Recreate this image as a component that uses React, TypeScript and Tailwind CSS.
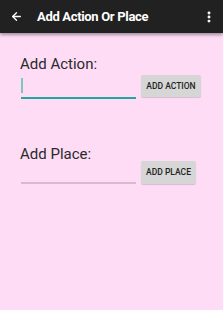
import { ArrowLeft, EllipsisVertical } from "lucide-react"

export default function App() {
    return (
        <div className="w-[223px] h-[310px] bg-[#fedcf5] font-['Roboto',sans-serif] overflow-hidden">
            {/* Toolbar */}
            <div className="h-[33px] bg-[#212121] flex items-center text-white shadow-[0_2px_3px_rgba(0,0,0,0.35)]">
                <ArrowLeft className="w-[13px] h-[13px] ml-[10px]" strokeWidth={2.5} />
                <span className="ml-[14px] text-[13px] font-bold tracking-tight">Add Action Or Place</span>
                <EllipsisVertical className="w-[14px] h-[14px] ml-auto mr-[7px]" strokeWidth={3} />
            </div>

            <div className="pt-[22px] pl-5">
                {/* Action */}
                <div className="text-[15px] leading-[18px] text-[#2a2a2a]">Add Action:</div>
                <div className="flex items-start pl-px mt-[2px]">
                    <div className="relative w-[115px] h-[24px] border-b-2 border-[#26a69a]">
                        <div className="absolute left-0 top-[3px] w-[2px] h-[15px] bg-[#7fc4bd]" />
                    </div>
                    <button className="ml-[5px] w-[60px] h-[22px] bg-[#d6d6d6] rounded-[2px] shadow-[0_1px_1px_rgba(0,0,0,0.15)] text-[8.5px] font-medium text-[#222]">
                        ADD ACTION
                    </button>
                </div>

                {/* Place */}
                <div className="mt-[46px] text-[15px] leading-[18px] text-[#2a2a2a]">Add Place:</div>
                <div className="flex items-start pl-px -mt-[2px]">
                    <div className="w-[115px] h-[23px] border-b-2 border-[#d9b9cd]" />
                    <button className="ml-[5px] w-[55px] h-[23px] bg-[#d6d6d6] rounded-[2px] shadow-[0_1px_1px_rgba(0,0,0,0.15)] text-[8.5px] font-medium text-[#222]">
                        ADD PLACE
                    </button>
                </div>
            </div>
        </div>
    )
}
